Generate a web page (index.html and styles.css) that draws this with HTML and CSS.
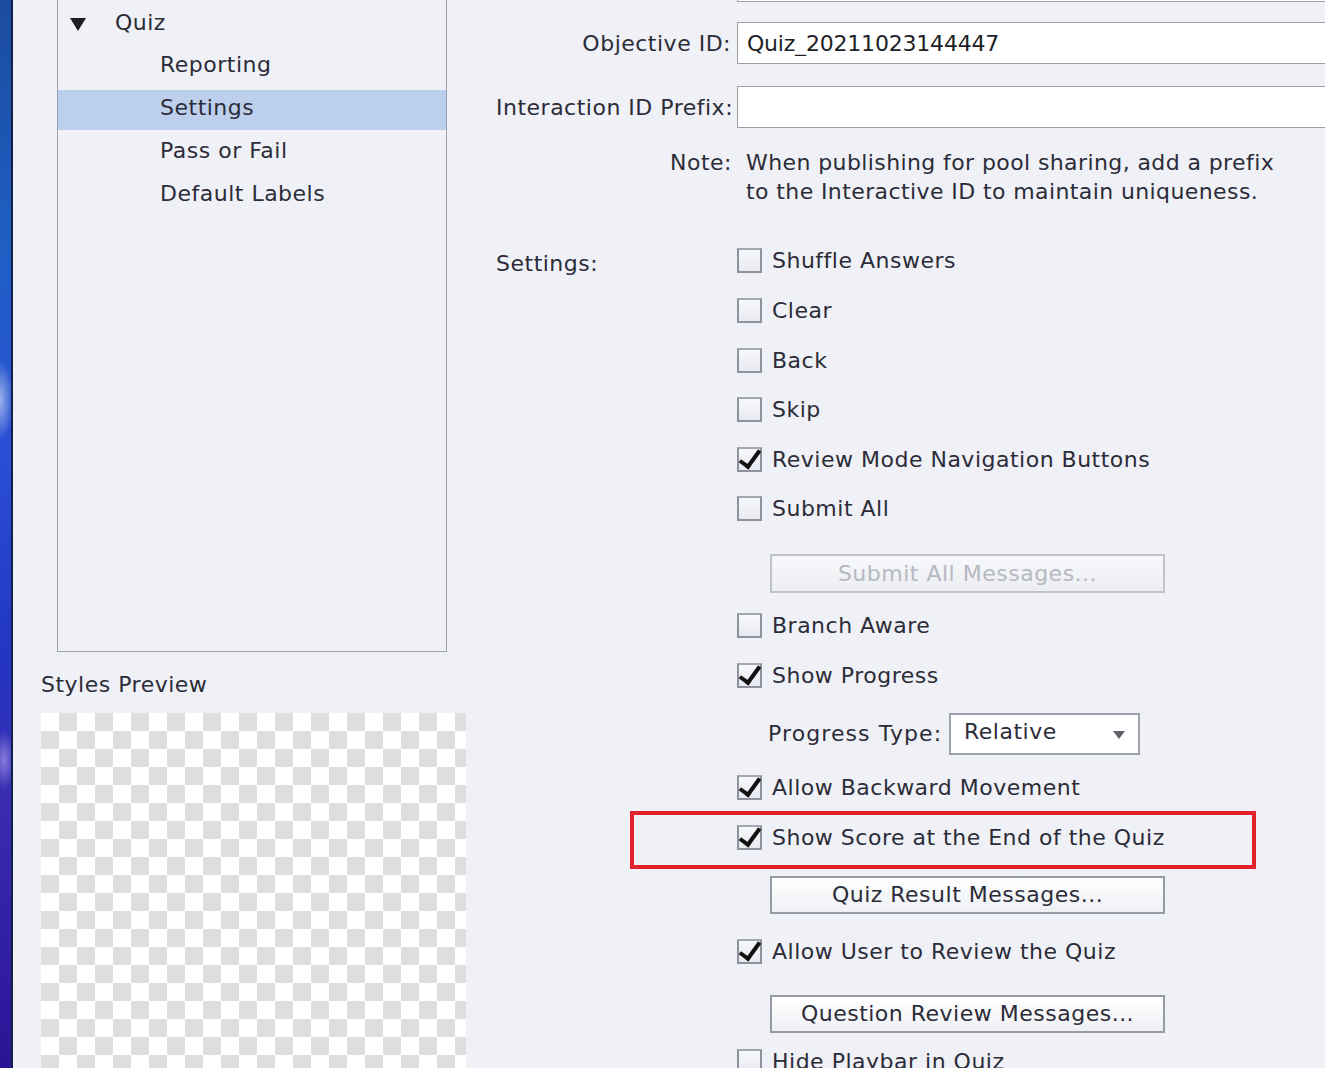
FILE: index.html
```html
<!DOCTYPE html>
<html lang="en">
  <head>
    <meta charset="UTF-8" />
    <meta name="viewport" content="width=device-width, initial-scale=1.0" />
    <title>Quiz Preferences - Settings</title>
    <link rel="stylesheet" href="styles.css">
  </head>
  <body>
    <div class="desktop"></div>

    <div class="dialog">
      <div class="left">
        <div class="tree">
          <div class="tree-item parent">
            <span class="twisty"></span>
            Quiz
          </div>
          <div class="tree-item child">Reporting</div>
          <div class="tree-item child selected">Settings</div>
          <div class="tree-item child">Pass or Fail</div>
          <div class="tree-item child">Default Labels</div>
        </div>

        <div class="preview-label">Styles Preview</div>
        <div class="preview"></div>
      </div>

      <div class="right">
        <div class="row first">
          <label></label>
          <input class="text-field" type="text" />
        </div>

        <div class="row objective">
          <label>Objective ID:</label>
          <input class="text-field" type="text" value="Quiz_20211023144447" />
        </div>

        <div class="row prefix">
          <label>Interaction ID Prefix:</label>
          <input class="text-field" type="text" />
        </div>

        <div class="row note">
          <label>Note:</label>
          <p>When publishing for pool sharing, add a prefix<br />to the Interactive ID to maintain uniqueness.</p>
        </div>

        <div class="row settings">
          <label class="left-label">Settings:</label>
          <div class="options">
            <div class="check"><span class="box"></span>Shuffle Answers</div>
            <div class="check"><span class="box"></span>Clear</div>
            <div class="check"><span class="box"></span>Back</div>
            <div class="check"><span class="box"></span>Skip</div>
            <div class="check"><span class="box checked"></span>Review Mode Navigation Buttons</div>
            <div class="check"><span class="box"></span>Submit All</div>

            <button class="msg-button submit-all" disabled>Submit All Messages...</button>

            <div class="check after-button"><span class="box"></span>Branch Aware</div>
            <div class="check"><span class="box checked"></span>Show Progress</div>

            <div class="progress-type">
              <span class="progress-label">Progress Type:</span>
              <div class="select">
                Relative
                <span class="arrow"></span>
              </div>
            </div>

            <div class="check after-select"><span class="box checked"></span>Allow Backward Movement</div>
            <div class="check highlighted">
              <span class="box checked"></span>Show Score at the End of the Quiz
              <div class="callout"></div>
            </div>

            <button class="msg-button result">Quiz Result Messages...</button>

            <div class="check after-result"><span class="box checked"></span>Allow User to Review the Quiz</div>

            <button class="msg-button review">Question Review Messages...</button>

            <div class="check after-review"><span class="box"></span>Hide Playbar in Quiz</div>
          </div>
        </div>
      </div>
    </div>
  </body>
</html>
```

FILE: styles.css
```css
body {
  margin: 0;
  height: 1068px;
  overflow: hidden;
  display: flex;
  background-color: #eff1f7;
  font-family: "DejaVu Sans", sans-serif;
  font-size: 22px;
  letter-spacing: 0.5px;
  color: #2c2c38;
}

.desktop {
  width: 11px;
  flex-shrink: 0;
  border-right: 2px solid #13204a;
  background:
    radial-gradient(ellipse 14px 40px at 0 400px, rgba(255, 255, 255, 0.55), transparent),
    radial-gradient(ellipse 12px 30px at 4px 760px, rgba(220, 200, 255, 0.5), transparent),
    linear-gradient(#1b4c9e 0, #1f5fc4 250px, #2b4fd6 450px, #2236c4 650px, #3a2cb0 800px, #2a1496 1068px);
}

.dialog {
  flex: 1;
  display: flex;
  min-width: 0;
}

/* left column */

.left {
  width: 439px;
  flex-shrink: 0;
  padding-left: 28px;
  display: flex;
  flex-direction: column;
}

.tree {
  margin-left: 16px;
  width: 390px;
  height: 652px;
  flex-shrink: 0;
  border: 1px solid #9ea2ae;
  border-top: none;
  padding-top: 4px;
  box-sizing: border-box;
}

.tree-item {
  height: 40px;
  margin-bottom: 2.75px;
  padding-bottom: 4px;
  box-sizing: border-box;
  display: flex;
  align-items: center;
}

.tree-item.parent {
  padding-left: 12px;
}

.tree-item.child {
  padding-left: 102px;
}

.tree-item.selected {
  background-color: #bcd0ee;
}

.twisty {
  width: 0;
  height: 0;
  border-left: 8px solid transparent;
  border-right: 8px solid transparent;
  border-top: 13px solid #1e1e24;
  margin-right: 29px;
  margin-top: 4px;
}

.preview-label {
  margin-top: 18px;
  line-height: 30px;
  height: 30px;
}

.preview {
  margin-top: 13px;
  width: 425px;
  flex: 1;
  background: repeating-conic-gradient(#dedede 0 25%, #ffffff 0 50%) 0 0 / 36px 36px;
}

/* right column */

.right {
  flex: 1;
  min-width: 0;
  padding-left: 16px;
  display: flex;
  flex-direction: column;
}

.row {
  display: grid;
  grid-template-columns: 235px 1fr;
  column-gap: 6px;
}

.row label {
  text-align: right;
  align-self: center;
  white-space: nowrap;
}

.row label.left-label {
  text-align: left;
  align-self: start;
  line-height: 49.6px;
  padding-top: 3px;
}

.text-field {
  width: 700px;
  height: 42px;
  box-sizing: border-box;
  border: 1px solid #9a9ea8;
  background: #ffffff;
  font-family: inherit;
  font-size: 22px;
  letter-spacing: -0.2px;
  color: #1e1e26;
  padding: 0 9px;
  margin: 0;
  outline: none;
}

.row.first {
  margin-top: -40px;
}

.row.objective {
  margin-top: 20px;
}

.row.prefix {
  margin-top: 22px;
}

.row.note {
  margin-top: 19.5px;
}

.row.note label {
  align-self: start;
  line-height: 29px;
  margin-right: -1px;
}

.row.note p {
  margin: 0 0 0 9px;
  line-height: 29px;
  letter-spacing: 0.4px;
  white-space: nowrap;
}

.row.settings {
  margin-top: 30.7px;
}

.options {
  display: flex;
  flex-direction: column;
}

.check {
  height: 49.6px;
  display: flex;
  align-items: center;
  white-space: nowrap;
  position: relative;
}

.box {
  width: 25px;
  height: 25px;
  box-sizing: border-box;
  border: 2px solid #8e929e;
  border-top-color: #a4a8b2;
  background: linear-gradient(#f7f8fb, #e8eaf0);
  margin-right: 10px;
  position: relative;
  flex-shrink: 0;
}

.box.checked::after {
  content: "";
  position: absolute;
  left: 5px;
  top: -3px;
  width: 8px;
  height: 18px;
  border-right: 4px solid #111111;
  border-bottom: 4px solid #111111;
  transform: rotate(36deg);
  transform-origin: 50% 50%;
}

.msg-button {
  width: 395px;
  height: 39px;
  margin-left: 33px;
  border: 2px solid #959aa6;
  background: linear-gradient(#ffffff, #eef0f4);
  font-family: inherit;
  font-size: 22px;
  letter-spacing: 0.5px;
  color: #2c2c38;
  padding: 0;
}

.msg-button:disabled {
  border-color: #c0c3ca;
  color: #b6b9c2;
  background: linear-gradient(#f7f8fa, #eceef2);
}

.msg-button.submit-all {
  margin-top: 20.2px;
}

.check.after-button {
  margin-top: 8.2px;
}

.progress-type {
  margin-top: 12.6px;
  margin-left: 31px;
  height: 42px;
  display: flex;
  align-items: center;
}

.progress-label {
  width: 175px;
  margin-right: 6px;
  letter-spacing: 1.1px;
  white-space: nowrap;
}

.select {
  width: 191px;
  height: 42px;
  box-sizing: border-box;
  border: 2px solid #9da1ab;
  background: #ffffff;
  padding: 0 0 4px 13px;
  display: flex;
  align-items: center;
  position: relative;
}

.arrow {
  position: absolute;
  right: 13px;
  top: 16px;
  width: 0;
  height: 0;
  border-left: 6px solid transparent;
  border-right: 6px solid transparent;
  border-top: 8px solid #5e626c;
}

.check.after-select {
  margin-top: 8.2px;
}

.callout {
  position: absolute;
  left: -107px;
  top: -2.2px;
  width: 626px;
  height: 58px;
  box-sizing: border-box;
  border: 4px solid #e3202b;
}

.msg-button.result {
  height: 38px;
  margin-top: 13.6px;
}

.check.after-result {
  margin-top: 13.2px;
}

.msg-button.review {
  height: 38px;
  margin-top: 18.2px;
}

.check.after-review {
  margin-top: 4.2px;
}
```
